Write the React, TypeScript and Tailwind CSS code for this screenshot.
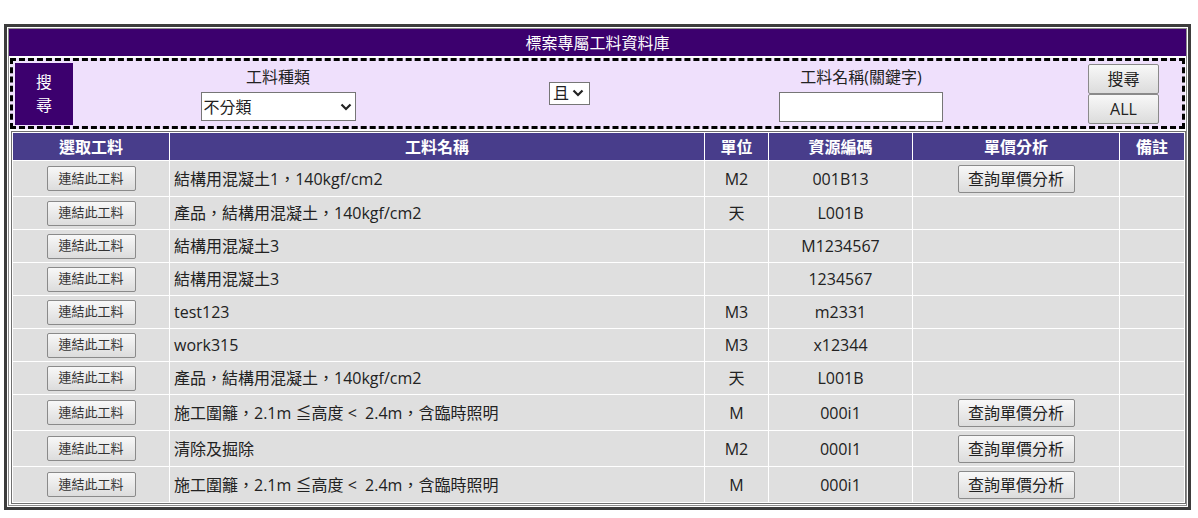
import React from "react";

type Row = {
    name: string;
    unit: string;
    code: string;
    analysis: boolean;
};

const ROWS: Row[] = [
    { name: "結構用混凝土1，140kgf/cm2", unit: "M2", code: "001B13", analysis: true },
    { name: "產品，結構用混凝土，140kgf/cm2", unit: "天", code: "L001B", analysis: false },
    { name: "結構用混凝土3", unit: "", code: "M1234567", analysis: false },
    { name: "結構用混凝土3", unit: "", code: "1234567", analysis: false },
    { name: "test123", unit: "M3", code: "m2331", analysis: false },
    { name: "work315", unit: "M3", code: "x12344", analysis: false },
    { name: "產品，結構用混凝土，140kgf/cm2", unit: "天", code: "L001B", analysis: false },
    { name: "施工圍籬，2.1m ≦高度 <  2.4m，含臨時照明", unit: "M", code: "000i1", analysis: true },
    { name: "清除及掘除", unit: "M2", code: "000I1", analysis: true },
    { name: "施工圍籬，2.1m ≦高度 <  2.4m，含臨時照明", unit: "M", code: "000i1", analysis: true },
];

const HEADERS = ["選取工料", "工料名稱", "單位", "資源編碼", "單價分析", "備註"];

function Chevron() {
    return (
        <svg width="12" height="8" viewBox="0 0 12 8" className="shrink-0">
            <polyline points="1.5,1.5 6,6 10.5,1.5" fill="none" stroke="#222" strokeWidth="2.2" />
        </svg>
    );
}

function FakeSelect({ value, className }: { value: string; className: string }) {
    return (
        <div className={`flex items-center justify-between bg-white border border-[#767676] text-[16px] text-[#222] ${className}`}>
            <span>{value}</span>
            <Chevron />
        </div>
    );
}

function GrayButton({ children, className }: { children: React.ReactNode; className: string }) {
    return (
        <button className={`flex items-center justify-center border border-[#8a8a8a] rounded-[2px] bg-linear-to-b from-[#f8f8f8] to-[#dcdcdc] ${className}`}>
            {children}
        </button>
    );
}

export default function App() {
    return (
        <div className="min-h-[518px] bg-white pt-[24px] pl-[4px] font-['Open_Sans','Noto_Sans_CJK_TC',sans-serif] text-[#222]">
            <div className="w-[1187px] border-[3px] border-[#3c3c3c] bg-white p-px">
                <div className="border border-[#8c8c8c] pb-px">
                    {/* title */}
                    <div className="h-[27px] bg-[#3c006e] flex items-center justify-center text-white text-[16px] leading-none">
                        標案專屬工料資料庫
                    </div>

                    {/* search panel */}
                    <div className="mt-[2px] mx-px h-[71px] border-[3px] border-dashed border-black bg-[#efe0fc] flex">
                        <div className="ml-[2px] mt-[2px] w-[58px] h-[62px] bg-[#3c006e] text-white text-[16px] leading-[23px] flex flex-col items-center justify-center">
                            <span>搜</span>
                            <span>尋</span>
                        </div>
                        <div className="w-[410px] flex flex-col items-center pt-[5px]">
                            <div className="text-[16px] leading-[22px]">工料種類</div>
                            <FakeSelect value="不分類" className="mt-[4px] w-[155px] h-[29px] pl-[2px] pr-[3px]" />
                        </div>
                        <div className="w-[173px] flex items-center justify-center">
                            <FakeSelect value="且" className="w-[41px] h-[23px] pl-[3px] pr-[5px] -mt-[1px]" />
                        </div>
                        <div className="w-[410px] flex flex-col items-center pt-[5px]">
                            <div className="text-[16px] leading-[22px]">工料名稱(關鍵字)</div>
                            <input className="mt-[4px] w-[164px] h-[30px] bg-white border border-[#767676]" />
                        </div>
                        <div className="ml-[22px] mt-[3px] flex flex-col">
                            <GrayButton className="w-[71px] h-[30px] text-[16px]">搜尋</GrayButton>
                            <GrayButton className="w-[71px] h-[30px] text-[16px]">ALL</GrayButton>
                        </div>
                    </div>

                    {/* data table */}
                    <div className="mt-[2px] ml-[2px] w-[1175px] border border-[#707070] p-px bg-white">
                        <div className="grid grid-cols-[156px_534px_63px_143px_206px_64px] gap-px bg-white">
                            {HEADERS.map((h) => (
                                <div key={h} className="h-[27px] bg-[#483d8b] text-white font-semibold text-[16px] flex items-center justify-center">
                                    {h}
                                </div>
                            ))}
                            {ROWS.map((row, i) => {
                                const height = row.analysis ? "h-[35px]" : "h-[32px]";
                                return (
                                    <React.Fragment key={i}>
                                        <div className={`${height} bg-[#dfdfdf] flex items-center justify-center`}>
                                            <GrayButton className="w-[89px] h-[25px] text-[13px] text-[#333]">連結此工料</GrayButton>
                                        </div>
                                        <div className={`${height} bg-[#dfdfdf] flex items-center pl-[4px] text-[16px] whitespace-pre`}>
                                            {row.name}
                                        </div>
                                        <div className={`${height} bg-[#dfdfdf] flex items-center justify-center text-[16px]`}>
                                            {row.unit}
                                        </div>
                                        <div className={`${height} bg-[#dfdfdf] flex items-center justify-center text-[16px]`}>
                                            {row.code}
                                        </div>
                                        <div className={`${height} bg-[#dfdfdf] flex items-center justify-center`}>
                                            {row.analysis && (
                                                <GrayButton className="w-[117px] h-[28px] text-[16px]">查詢單價分析</GrayButton>
                                            )}
                                        </div>
                                        <div className={`${height} bg-[#dfdfdf]`} />
                                    </React.Fragment>
                                );
                            })}
                        </div>
                    </div>
                </div>
            </div>
        </div>
    );
}
